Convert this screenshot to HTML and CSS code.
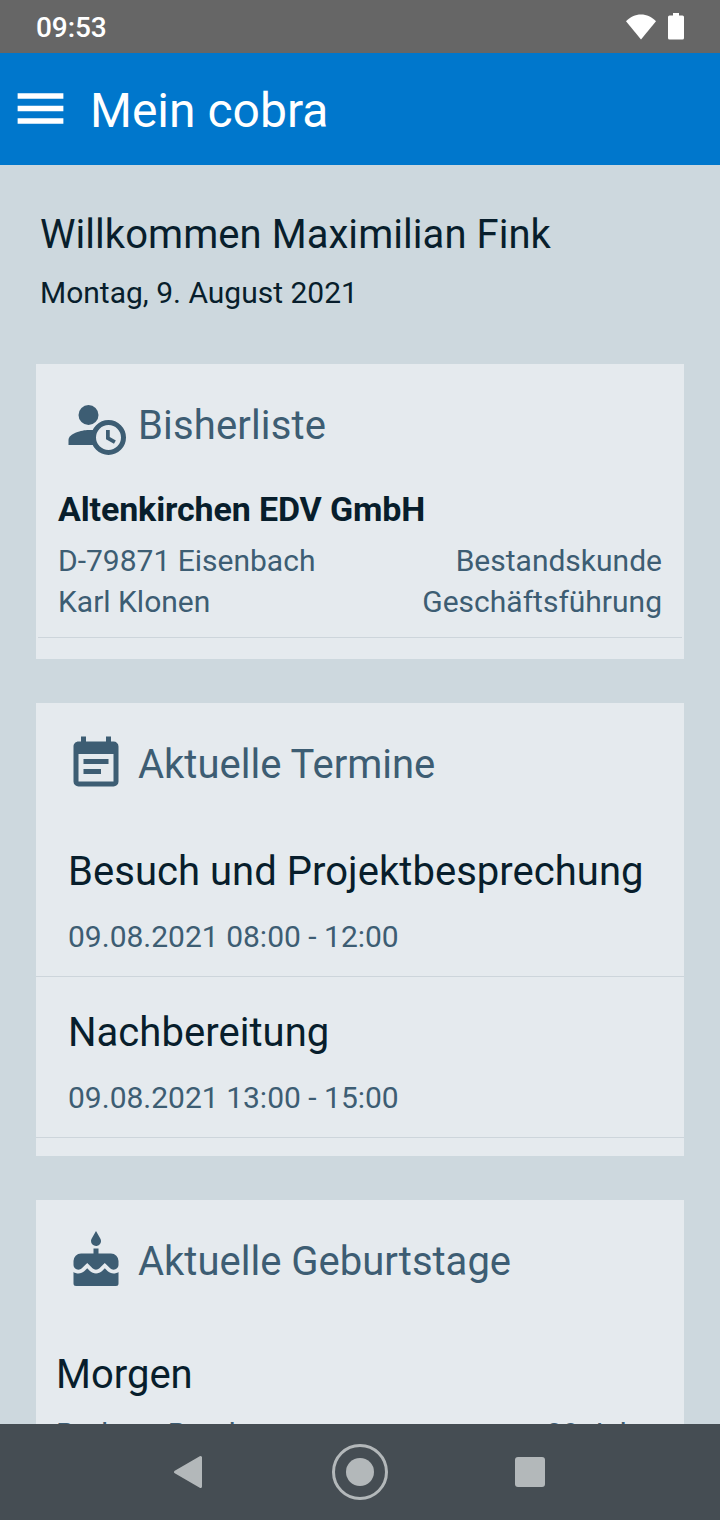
FILE: index.html
```html
<!DOCTYPE html>
<html lang="de">
<head>
    <meta charset="UTF-8">
    <meta name="viewport" content="width=device-width, initial-scale=1.0">
    <title>Mein cobra</title>
    <link rel="stylesheet" href="styles.css">
</head>
<body>
    <div class="statusbar">
        <span class="clock">09:53</span>
        <svg class="wifi" width="30" height="26" viewBox="0 0 30 26"><path d="M15 25.500L0 7.200C4 3 9.300 .5 15 .5S26 3 30 7.200Z"/></svg>
        <svg class="battery" width="16" height="27" viewBox="0 0 16 27"><path d="M5 0h6v2.500h3.500a1.500 1.500 0 0 1 1.500 1.500v21a1.500 1.500 0 0 1-1.500 1.500h-13a1.500 1.500 0 0 1-1.500-1.500v-21a1.500 1.500 0 0 1 1.500-1.500h3.500z"/></svg>
    </div>

    <header class="appbar">
        <svg class="menu" width="61" height="61" viewBox="0 0 24 24"><path d="M3 6h18v2.200H3zM3 10.900h18v2.200H3zM3 15.800h18V18H3z"/></svg>
        <h1>Mein cobra</h1>
    </header>

    <main>
        <div class="welcome">
            <h2>Willkommen Maximilian Fink</h2>
            <p>Montag, 9. August 2021</p>
        </div>

        <section class="card recent">
            <div class="card-title">
                <svg class="icon" viewBox="0 0 24 24">
                    <circle cx="9" cy="8" r="4"/>
                    <path d="M9 14c-2.670 0-8 1.340-8 4v2h10.500v-6z"/>
                    <circle class="clock-face" cx="17" cy="17" r="6"/>
                    <path d="M16 14h1.500v2.820l2.440 1.410-.75 1.300L16 17.690z"/>
                </svg>
                <h3>Bisherliste</h3>
            </div>
            <div class="contact">
                <div class="company">Altenkirchen EDV GmbH</div>
                <div class="row"><span>D-79871 Eisenbach</span><span>Bestandskunde</span></div>
                <div class="row"><span>Karl Klonen</span><span>Geschäftsführung</span></div>
            </div>
        </section>

        <section class="card events">
            <div class="card-title">
                <svg class="icon" viewBox="0 0 24 24"><path d="M14 14H7v2h7m5 3H5V8h14m0-5h-1V1h-2v2H8V1H6v2H5c-1.110 0-2 .9-2 2v14a2 2 0 0 0 2 2h14a2 2 0 0 0 2-2V5a2 2 0 0 0-2-2m-2 7H7v2h10v-2z"/></svg>
                <h3>Aktuelle Termine</h3>
            </div>
            <div class="event">
                <div class="event-name">Besuch und Projektbesprechung</div>
                <div class="event-time">09.08.2021 08:00 - 12:00</div>
            </div>
            <div class="event">
                <div class="event-name">Nachbereitung</div>
                <div class="event-time">09.08.2021 13:00 - 15:00</div>
            </div>
        </section>

        <section class="card birthdays">
            <div class="card-title">
                <svg class="icon" viewBox="0 0 24 24"><path d="M12 6c1.110 0 2-.9 2-2 0-.38-.1-.73-.29-1.030L12 0l-1.710 2.970C10.100 3.270 10 3.620 10 4a2 2 0 0 0 2 2m4.600 10l-1.070-1.080L14.450 16c-1.300 1.290-3.580 1.300-4.890 0L8.500 14.920 7.400 16c-.65.64-1.520 1-2.440 1-.73 0-1.400-.23-1.960-.61V21a1 1 0 0 0 1 1h16a1 1 0 0 0 1-1v-4.610c-.56.38-1.230.61-1.960.61-.92 0-1.790-.36-2.440-1M18 9h-5V7h-2v2H6a3 3 0 0 0-3 3v1.540c0 1.080.88 1.960 1.960 1.960.54 0 1.040-.2 1.380-.57L8.500 12.800l2.110 2.130c.74.74 2.030.74 2.770 0l2.120-2.130 2.150 2.130c.35.370.850.570 1.380.570 1.090 0 1.970-.88 1.970-1.960V12a3 3 0 0 0-3-3z"/></svg>
                <h3>Aktuelle Geburtstage</h3>
            </div>
            <div class="day">Morgen</div>
            <div class="row"><span>Barbara Bend</span><span>29 Jahre</span></div>
        </section>
    </main>

    <nav class="navbar">
        <svg width="96" height="96" viewBox="0 0 96 96"><path class="soft" d="M33.500 48L58.500 33.500V62.500Z"/></svg>
        <svg width="96" height="96" viewBox="0 0 96 96"><circle class="ring" cx="48" cy="48" r="26.500"/><circle cx="48" cy="48" r="14"/></svg>
        <svg width="96" height="96" viewBox="0 0 96 96"><rect x="33" y="33" width="30" height="30" rx="3"/></svg>
    </nav>
</body>
</html>
```
FILE: styles.css
```css
* {
    box-sizing: border-box;
}
body {
    margin: 0;
    height: 1520px;
    display: flex;
    flex-direction: column;
    overflow: hidden;
    font-family: Roboto, sans-serif;
    background-color: #cdd8de;
    color: #081e2c;
}
h1, h2, h3, p {
    margin: 0;
    font-weight: 400;
}
svg {
    display: block;
    flex: none;
}
.statusbar {
    flex: none;
    height: 53px;
    padding: 0 36px;
    display: flex;
    align-items: center;
    background-color: #666;
    color: #fff;
    fill: #fff;
}
.clock {
    flex: 1;
    padding-top: 2px;
    font-size: 28px;
    font-weight: 500;
    letter-spacing: -0.1px;
}
.wifi {
    margin-right: 12px;
}
.appbar {
    flex: none;
    height: 112px;
    padding-left: 10px;
    display: flex;
    align-items: center;
    background-color: #0077cc;
    color: #fff;
    fill: #fff;
}
.menu {
    margin-bottom: 2px;
}
.appbar h1 {
    margin-left: 19px;
    padding-top: 4px;
    font-size: 48px;
    line-height: 56px;
}
main {
    flex: 1;
    min-height: 0;
    overflow: hidden;
    padding: 0 36px;
}
.welcome {
    height: 199px;
    padding: 46px 4px 0;
}
.welcome h2 {
    font-size: 40px;
    line-height: 48px;
    letter-spacing: 0.05px;
}
.welcome p {
    margin-top: 15px;
    font-size: 30px;
    line-height: 38px;
}
.card {
    margin-bottom: 44px;
    background-color: #e5eaee;
}
.card-title {
    height: 122px;
    padding: 30.5px 30px 0;
    display: flex;
    align-items: flex-start;
    color: #3d5d73;
}
.card-title h3 {
    margin-left: 12px;
    padding-top: 7.5px;
    font-size: 40px;
    line-height: 48px;
}
.icon {
    width: 60px;
    height: 60px;
    fill: #3d5d73;
}
.clock-face {
    fill: #e5eaee;
    stroke: #3d5d73;
    stroke-width: 2;
}
.row {
    display: flex;
    justify-content: space-between;
    font-size: 30px;
    line-height: 41px;
    color: #3d5d73;
}
.recent {
    height: 295px;
}
.recent .card-title {
    height: 121px;
}
.recent h3 {
    letter-spacing: 0.15px;
}
.contact {
    height: 153px;
    margin: 0 2px;
    padding: 0 20px;
    border-bottom: 1px solid #cdd5db;
}
.company {
    height: 55px;
    font-size: 34px;
    font-weight: 700;
    line-height: 48px;
    letter-spacing: -0.13px;
}
.events {
    height: 453px;
}
.events .card-title {
    height: 113px;
}
.event {
    height: 161px;
    padding: 32px 32px 0;
    border-bottom: 1px solid #cdd5db;
}
.event-name {
    font-size: 40px;
    line-height: 48px;
    white-space: nowrap;
    letter-spacing: 0.04px;
}
.event-time {
    margin-top: 22px;
    font-size: 30px;
    line-height: 38px;
    color: #3d5d73;
}
.birthdays {
    height: 295px;
}
.birthdays .card-title {
    height: 151px;
}
.day {
    padding: 0 20px;
    font-size: 40px;
    line-height: 48px;
}
.birthdays .row {
    margin-top: 14px;
    padding: 0 22px 0 20px;
}
.navbar {
    flex: none;
    height: 96px;
    padding: 0 142px;
    display: flex;
    justify-content: space-between;
    background-color: #454d53;
    fill: #b3b8ba;
}
.soft {
    stroke: #b3b8ba;
    stroke-width: 3;
    stroke-linejoin: round;
}
.ring {
    fill: none;
    stroke: #b3b8ba;
    stroke-width: 3;
}
```
